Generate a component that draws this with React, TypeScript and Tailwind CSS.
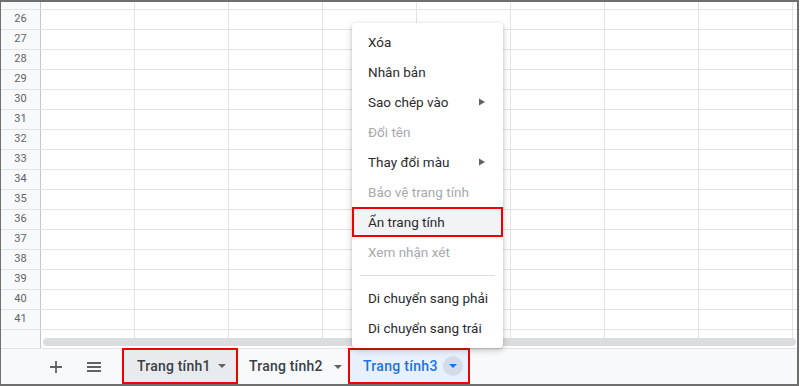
import React from 'react';

const font = { fontFamily: 'Roboto, "Liberation Sans", Arial, sans-serif' };

const rowNumbers = Array.from({ length: 18 }, (_, i) => 25 + i);
const columns = Array.from({ length: 9 }, (_, i) => i);

type MenuItem = { label: string; disabled?: boolean; submenu?: boolean; active?: boolean; divider?: boolean };

const menuItems: MenuItem[] = [
  { label: 'Xóa' },
  { label: 'Nhân bản' },
  { label: 'Sao chép vào', submenu: true },
  { label: 'Đổi tên', disabled: true },
  { label: 'Thay đổi màu', submenu: true },
  { label: 'Bảo vệ trang tính', disabled: true },
  { label: 'Ẩn trang tính', active: true },
  { label: 'Xem nhận xét', disabled: true },
  { label: '', divider: true },
  { label: 'Di chuyển sang phải' },
  { label: 'Di chuyển sang trái' },
];

const Caret = ({ color = '#5f6368' }: { color?: string }) => (
  <svg width="8" height="4" viewBox="0 0 8 4">
    <polygon points="0,0 8,0 4,4" fill={color} />
  </svg>
);

const SheetMenu = () => (
  <div className="absolute left-[352px] top-[23px] w-[151px] rounded bg-white pt-[4px] pb-[5px] shadow-[0_2px_6px_rgba(60,64,67,0.3),0_1px_2px_rgba(60,64,67,0.15)]">
    {menuItems.map((item, i) =>
      item.divider ? (
        <div key={i} className="flex h-[16px] items-center px-[8px]">
          <div className="h-px w-full bg-[#dadce0]" />
        </div>
      ) : (
        <div
          key={i}
          className={
            item.active
              ? 'flex h-[30px] items-center justify-between whitespace-nowrap border-2 border-[#f00000] bg-[#f1f3f4] pl-[14px] pr-[16px] text-[13.5px] text-[#2a2b2e]'
              : item.disabled
              ? 'flex h-[30px] items-center justify-between whitespace-nowrap pl-[16px] pr-[18px] text-[13.5px] text-[#a6a9ad]'
              : 'flex h-[30px] items-center justify-between whitespace-nowrap pl-[16px] pr-[18px] text-[13.5px] text-[#2a2b2e]'
          }
        >
          <span>{item.label}</span>
          {item.submenu && (
            <svg width="6" height="8" viewBox="0 0 6 8">
              <polygon points="0,0.5 6,4 0,7.5" fill="#5f6368" />
            </svg>
          )}
        </div>
      )
    )}
  </div>
);

export default function App() {
  return (
    <div className="relative h-[386px] w-[800px] overflow-hidden bg-white" style={font}>
      <div className="flex h-[386px] w-[799px] flex-col border-b-2 border-l border-r-2 border-t-2 border-[#6f6f6f]">
        {/* grid */}
        <div className="h-[336px] overflow-hidden">
          <div className="-mt-[12px]">
            {rowNumbers.map((n) => (
              <div key={n} className="flex h-[20px] border-b border-[#e2e3e3]">
                <div className="flex w-[40px] shrink-0 items-center justify-center border-r border-[#c4c7c5] bg-[#f8f9fa] text-[11px] text-[#5f6368]">
                  {n < 42 ? n : ''}
                </div>
                {columns.map((c) => (
                  <div key={c} className="w-[94px] shrink-0 border-r border-[#e2e3e3]" />
                ))}
              </div>
            ))}
          </div>
        </div>

        {/* horizontal scrollbar */}
        <div className="flex h-[10px]">
          <div className="w-[40px] shrink-0 border-r border-[#c4c7c5] bg-[#f8f9fa]" />
          <div className="flex-1 pl-[2px] pr-[1px]">
            <div className="h-[8px] rounded-full bg-[#dadce0]" />
          </div>
        </div>

        {/* sheet tabs */}
        <div className="flex h-[36px] items-stretch border-t border-[#e3e3e3] bg-[#f8f9fa]">
          <div className="w-[42px] shrink-0" />
          <div className="flex w-[26px] items-center justify-center">
            <svg width="12" height="12" viewBox="0 0 12 12">
              <path d="M6 0v12M0 6h12" stroke="#5f6368" strokeWidth="1.8" />
            </svg>
          </div>
          <div className="w-[12px]" />
          <div className="flex w-[26px] items-center justify-center">
            <svg width="14" height="12" viewBox="0 0 14 12">
              <path d="M0 2h14M0 6h14M0 10h14" stroke="#5f6368" strokeWidth="1.8" />
            </svg>
          </div>
          <div className="w-[15px]" />
          <div className="-mt-[1px] flex w-[116px] items-center gap-[7px] border-2 border-[#f00000] bg-[#e8eaed] pl-[13px] text-[14px] font-medium tracking-[0.2px] text-[#3c4043]">
            <span>Trang tính1</span>
            <Caret />
          </div>
          <div className="flex w-[110px] items-center gap-[11px] pl-[11px] text-[14px] font-medium tracking-[0.2px] text-[#3c4043]">
            <span>Trang tính2</span>
            <Caret />
          </div>
          <div className="-mt-[1px] flex w-[122px] items-center gap-[5px] border-2 border-[#f00000] bg-[#e8f0fe] pl-[13px] text-[14px] font-medium tracking-[0.3px] text-[#1a73e8]">
            <span>Trang tính3</span>
            <div className="flex h-[20px] w-[20px] items-center justify-center rounded-full bg-[#d3dce9]">
              <Caret color="#1a73e8" />
            </div>
          </div>
        </div>
      </div>

      <SheetMenu />
    </div>
  );
}
